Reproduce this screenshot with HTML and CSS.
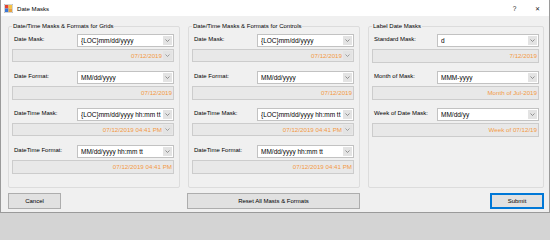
FILE: index.html
```html
<!DOCTYPE html>
<html>
<head>
<meta charset="utf-8">
<link rel="stylesheet" href="styles.css">
</head>
<body>
<div class="window">
  <div class="titlebar">
    <svg class="app-icon" width="9" height="9" viewBox="0 0 9 9">
      <rect x="0" y="0" width="9" height="9" fill="#f4f4f4" stroke="#8a8a8a" stroke-width="0.6"/>
      <rect x="1" y="1" width="3.5" height="3.5" fill="#e34234"/>
      <rect x="4.5" y="1" width="3.5" height="3.5" fill="#f6c343"/>
      <rect x="1" y="4.5" width="3.5" height="3.5" fill="#3b78d8"/>
      <rect x="4.5" y="4.5" width="3.5" height="3.5" fill="#e8a23b"/>
    </svg>
    <span class="title">Date Masks</span>
    <span class="tb-btn">?</span>
    <span class="tb-btn close">&#x2715;</span>
  </div>
  <div class="client">
    <div class="groups">
      <fieldset class="group">
        <legend>Date/Time Masks &amp; Formats for Grids</legend>
        <div class="section">
          <div class="field-row"><label>Date Mask:</label><div class="combo"><span class="val">{LOC}mm/dd/yyyy</span><span class="drop"><svg width="5" height="3" viewBox="0 0 5 3"><path d="M0.5 0.5 L2.5 2.5 L4.5 0.5" fill="none" stroke="#7a7a7a" stroke-width="0.8"/></svg></span></div></div>
          <div class="combo disabled"><span class="val out">07/12/2019</span><span class="drop"><svg width="5" height="3" viewBox="0 0 5 3"><path d="M0.5 0.5 L2.5 2.5 L4.5 0.5" fill="none" stroke="#8a8a8a" stroke-width="0.8"/></svg></span></div>
        </div>
        <div class="section">
          <div class="field-row"><label>Date Format:</label><div class="combo"><span class="val">MM/dd/yyyy</span><span class="drop"><svg width="5" height="3" viewBox="0 0 5 3"><path d="M0.5 0.5 L2.5 2.5 L4.5 0.5" fill="none" stroke="#7a7a7a" stroke-width="0.8"/></svg></span></div></div>
          <div class="textbox"><span class="out">07/12/2019</span></div>
        </div>
        <div class="section">
          <div class="field-row"><label>DateTime Mask:</label><div class="combo"><span class="val">{LOC}mm/dd/yyyy hh:mm tt</span><span class="drop"><svg width="5" height="3" viewBox="0 0 5 3"><path d="M0.5 0.5 L2.5 2.5 L4.5 0.5" fill="none" stroke="#7a7a7a" stroke-width="0.8"/></svg></span></div></div>
          <div class="combo disabled"><span class="val out">07/12/2019 04:41 PM</span><span class="drop"><svg width="5" height="3" viewBox="0 0 5 3"><path d="M0.5 0.5 L2.5 2.5 L4.5 0.5" fill="none" stroke="#8a8a8a" stroke-width="0.8"/></svg></span></div>
        </div>
        <div class="section">
          <div class="field-row"><label>DateTime Format:</label><div class="combo"><span class="val">MM/dd/yyyy hh:mm tt</span><span class="drop"><svg width="5" height="3" viewBox="0 0 5 3"><path d="M0.5 0.5 L2.5 2.5 L4.5 0.5" fill="none" stroke="#7a7a7a" stroke-width="0.8"/></svg></span></div></div>
          <div class="textbox"><span class="out">07/12/2019 04:41 PM</span></div>
        </div>
      </fieldset>

      <fieldset class="group">
        <legend>Date/Time Masks &amp; Formats for Controls</legend>
        <div class="section">
          <div class="field-row"><label>Date Mask:</label><div class="combo"><span class="val">{LOC}mm/dd/yyyy</span><span class="drop"><svg width="5" height="3" viewBox="0 0 5 3"><path d="M0.5 0.5 L2.5 2.5 L4.5 0.5" fill="none" stroke="#7a7a7a" stroke-width="0.8"/></svg></span></div></div>
          <div class="combo disabled"><span class="val out">07/12/2019</span><span class="drop"><svg width="5" height="3" viewBox="0 0 5 3"><path d="M0.5 0.5 L2.5 2.5 L4.5 0.5" fill="none" stroke="#8a8a8a" stroke-width="0.8"/></svg></span></div>
        </div>
        <div class="section">
          <div class="field-row"><label>Date Format:</label><div class="combo"><span class="val">MM/dd/yyyy</span><span class="drop"><svg width="5" height="3" viewBox="0 0 5 3"><path d="M0.5 0.5 L2.5 2.5 L4.5 0.5" fill="none" stroke="#7a7a7a" stroke-width="0.8"/></svg></span></div></div>
          <div class="textbox"><span class="out">07/12/2019</span></div>
        </div>
        <div class="section">
          <div class="field-row"><label>DateTime Mask:</label><div class="combo"><span class="val">{LOC}mm/dd/yyyy hh:mm tt</span><span class="drop"><svg width="5" height="3" viewBox="0 0 5 3"><path d="M0.5 0.5 L2.5 2.5 L4.5 0.5" fill="none" stroke="#7a7a7a" stroke-width="0.8"/></svg></span></div></div>
          <div class="combo disabled"><span class="val out">07/12/2019 04:41 PM</span><span class="drop"><svg width="5" height="3" viewBox="0 0 5 3"><path d="M0.5 0.5 L2.5 2.5 L4.5 0.5" fill="none" stroke="#8a8a8a" stroke-width="0.8"/></svg></span></div>
        </div>
        <div class="section">
          <div class="field-row"><label>DateTime Format:</label><div class="combo"><span class="val">MM/dd/yyyy hh:mm tt</span><span class="drop"><svg width="5" height="3" viewBox="0 0 5 3"><path d="M0.5 0.5 L2.5 2.5 L4.5 0.5" fill="none" stroke="#7a7a7a" stroke-width="0.8"/></svg></span></div></div>
          <div class="textbox"><span class="out">07/12/2019 04:41 PM</span></div>
        </div>
      </fieldset>

      <fieldset class="group wide">
        <legend>Label Date Masks</legend>
        <div class="section">
          <div class="field-row"><label>Standard Mask:</label><div class="combo"><span class="val">d</span><span class="drop"><svg width="5" height="3" viewBox="0 0 5 3"><path d="M0.5 0.5 L2.5 2.5 L4.5 0.5" fill="none" stroke="#7a7a7a" stroke-width="0.8"/></svg></span></div></div>
          <div class="textbox"><span class="out">7/12/2019</span></div>
        </div>
        <div class="section">
          <div class="field-row"><label>Month of Mask:</label><div class="combo"><span class="val">MMM-yyyy</span><span class="drop"><svg width="5" height="3" viewBox="0 0 5 3"><path d="M0.5 0.5 L2.5 2.5 L4.5 0.5" fill="none" stroke="#7a7a7a" stroke-width="0.8"/></svg></span></div></div>
          <div class="textbox"><span class="out">Month of Jul-2019</span></div>
        </div>
        <div class="section">
          <div class="field-row"><label>Week of Date Mask:</label><div class="combo"><span class="val">MM/dd/yy</span><span class="drop"><svg width="5" height="3" viewBox="0 0 5 3"><path d="M0.5 0.5 L2.5 2.5 L4.5 0.5" fill="none" stroke="#7a7a7a" stroke-width="0.8"/></svg></span></div></div>
          <div class="textbox"><span class="out">Week of 07/12/19</span></div>
        </div>
      </fieldset>
    </div>
    <div class="buttons">
      <button class="btn cancel">Cancel</button>
      <button class="btn reset">Reset All Masts &amp; Formats</button>
      <button class="btn submit">Submit</button>
    </div>
  </div>
</div>
</body>
</html>
```

FILE: styles.css
```css
* { box-sizing: border-box; }

html, body {
  margin: 0;
  padding: 0;
  background: #d4d4d4;
}

body {
  font-family: "Liberation Sans", Arial, sans-serif;
  font-size: 6px;
  color: #000;
}

.window {
  width: 550px;
  height: 213px;
  background: #f0f0f0;
  border: 1px solid #9a9a9a;
  border-top: none;
  overflow: hidden;
}

.titlebar {
  height: 16px;
  background: #ffffff;
  display: flex;
  align-items: center;
  padding-left: 3px;
}

.app-icon {
  flex: none;
  margin-right: 4px;
}

.title {
  flex: 1;
  font-size: 6.1px;
  color: #000;
}

.tb-btn {
  width: 23px;
  text-align: center;
  font-size: 6.5px;
  color: #222;
}

.tb-btn.close {
  font-size: 6px;
}

.client {
  padding: 6px 6px 0 7px;
}

.groups {
  display: grid;
  grid-template-columns: 172px 172px 176px;
  column-gap: 8px;
  height: 166px;
}

.group {
  margin: 0;
  padding: 4px 5px 5px 3px;
  border: 1px solid #dcdcdc;
  border-radius: 2px;
  min-width: 0;
}

.group.wide {
  padding-right: 4px;
}

.group legend {
  padding: 0 1px;
  line-height: 8px;
  font-size: 6px;
  color: #000;
}

.section {
  height: 37px;
}

.field-row {
  display: grid;
  grid-template-columns: 65px 1fr;
  height: 13px;
  margin-bottom: 2px;
}

.field-row label {
  padding-left: 2px;
  line-height: 11px;
  font-size: 6px;
  white-space: nowrap;
}

.combo {
  display: flex;
  align-items: center;
  height: 13px;
  background: #ffffff;
  border: 1px solid #c2c2c2;
  padding-left: 3px;
}

.combo .val {
  flex: 1;
  line-height: 11px;
  font-size: 6.5px;
  white-space: nowrap;
  overflow: hidden;
  color: #000;
}

.drop {
  flex: none;
  width: 9px;
  height: 9px;
  margin: 0 1px;
  background: #e3e3e3;
  display: flex;
  align-items: center;
  justify-content: center;
}

.combo.disabled {
  background: #e8e8e8;
  border-color: #cccccc;
}

.combo.disabled .val {
  text-align: right;
  font-size: 6.2px;
}

.textbox {
  height: 14px;
  background: #e8e8e8;
  border: 1px solid #cccccc;
  text-align: right;
  padding-right: 1px;
  line-height: 11px;
  font-size: 6.2px;
  white-space: nowrap;
}

.out,
.combo.disabled .val.out {
  color: #f39a45;
}

.buttons {
  display: grid;
  grid-template-columns: 172px 172px 176px;
  column-gap: 8px;
  margin-top: 5px;
}

.btn {
  height: 16px;
  background: #e1e1e1;
  border: 1px solid #adadad;
  border-radius: 0;
  font-family: "Liberation Sans", Arial, sans-serif;
  font-size: 6px;
  color: #000;
  padding: 0;
  margin: 0;
}

.btn.cancel {
  width: 53px;
  justify-self: start;
}

.btn.reset {
  margin-left: -1px;
  width: 173px;
}

.btn.submit {
  width: 54px;
  justify-self: end;
  border: 1px solid #0078d7;
  box-shadow: inset 0 0 0 1px #0078d7;
}
```
